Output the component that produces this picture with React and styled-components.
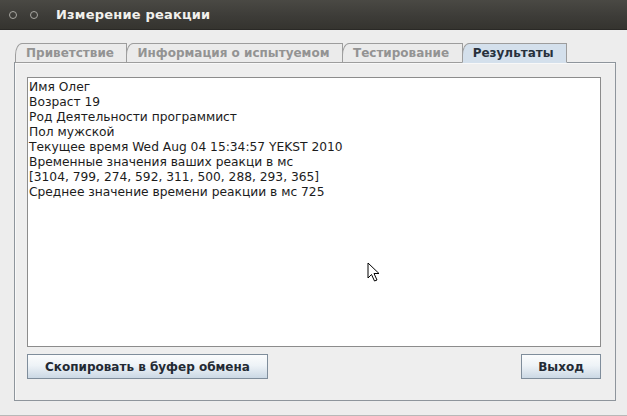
import React from 'react';
import styled, { createGlobalStyle } from 'styled-components';

const GlobalStyle = createGlobalStyle`
  html, body {
    margin: 0;
    padding: 0;
    background: #ededed;
  }
  body {
    font-family: 'DejaVu Sans', 'Liberation Sans', sans-serif;
  }
`;

const Window = styled.div`
  position: relative;
  width: 627px;
  height: 416px;
  display: flex;
  flex-direction: column;
  background: #ededed;
  overflow: hidden;
`;

const TitleBar = styled.div`
  height: 30px;
  flex: none;
  display: flex;
  align-items: center;
  padding-left: 9px;
  background: linear-gradient(#4a4944, #3c3b37 60%, #35342f);
  border-bottom: 1px solid #2a2926;
  box-sizing: border-box;
`;

const Dot = styled.span`
  width: 6px;
  height: 6px;
  border-radius: 50%;
  border: 1px solid #a8a7a2;
  margin-right: 13px;
`;

const Title = styled.span`
  margin-left: 5px;
  color: #f2f1ed;
  font-weight: bold;
  font-size: 13px;
  letter-spacing: 0.2px;
`;

const Content = styled.div`
  flex: 1;
  display: flex;
  flex-direction: column;
  padding: 13px 11px 0 14px;
`;

const TabRow = styled.div`
  display: flex;
  align-items: flex-end;
  height: 20px;
  padding-left: 1px;
  position: relative;
  z-index: 1;
  margin-bottom: -1px;
`;

const Tab = styled.div`
  height: 20px;
  box-sizing: border-box;
  display: flex;
  align-items: center;
  padding: 0 12.5px 0 10px;
  margin-right: -1px;
  font-size: 12px;
  font-weight: bold;
  color: ${(p) => (p.$active ? '#27313d' : '#939393')};
  background: ${(p) => (p.$active ? '#d4e0ec' : '#ebebeb')};
  border: 1px solid #9d9d9d;
  border-bottom: ${(p) => (p.$active ? '1px solid #d4e0ec' : '1px solid #9d9d9d')};
  border-top-left-radius: 7px 12px;
  white-space: nowrap;
`;

const Panel = styled.div`
  height: 339px;
  box-sizing: border-box;
  display: flex;
  flex-direction: column;
  border: 1px solid #8e959c;
  box-shadow: inset 1px 1px 0 #f8f8f8;
  background: #eeeeee;
  padding: 14px 14px 21px 12px;
`;

const Output = styled.div`
  flex: 1;
  background: #ffffff;
  border: 1px solid #8c8c8c;
  padding: 2px 1px;
  font-size: 12.25px;
  line-height: 15px;
  color: #1c1c1c;
`;

const ButtonRow = styled.div`
  display: flex;
  justify-content: space-between;
  margin-top: 7px;
`;

const Button = styled.button`
  height: 25px;
  box-sizing: border-box;
  padding: 0 ${(p) => (p.$wide ? '17px' : '16px')};
  border: 1px solid #7f8d9b;
  border-radius: 0;
  background: linear-gradient(#fbfcfd, #eef3f7 45%, #cbd8e4);
  font-family: 'DejaVu Sans', 'Liberation Sans', sans-serif;
  font-size: 12px;
  font-weight: bold;
  color: #232a33;
  min-width: 80px;
`;

const Footer = styled.div`
  height: 14px;
  flex: none;
  border-bottom: 1px solid #b8b8b8;
  box-sizing: border-box;
  margin-top: auto;
`;

const Cursor = styled.svg`
  position: absolute;
  left: 367px;
  top: 262px;
`;

const lines = [
  'Имя Олег',
  'Возраст 19',
  'Род Деятельности программист',
  'Пол мужской',
  'Текущее время Wed Aug 04 15:34:57 YEKST 2010',
  'Временные значения ваших реакци в мс',
  '[3104, 799, 274, 592, 311, 500, 288, 293, 365]',
  'Среднее значение времени реакции в мс 725',
];

const tabs = ['Приветствие', 'Информация о испытуемом', 'Тестирование', 'Результаты'];

export default function App() {
  return (
    <>
      <GlobalStyle />
      <Window>
        <TitleBar>
          <Dot />
          <Dot />
          <Title>Измерение реакции</Title>
        </TitleBar>
        <Content>
          <TabRow>
            {tabs.map((t, i) => (
              <Tab key={t} $active={i === 3}>
                {t}
              </Tab>
            ))}
          </TabRow>
          <Panel>
            <Output>
              {lines.map((l) => (
                <div key={l}>{l}</div>
              ))}
            </Output>
            <ButtonRow>
              <Button $wide>Скопировать в буфер обмена</Button>
              <Button>Выход</Button>
            </ButtonRow>
          </Panel>
        </Content>
        <Footer />
        <Cursor width="14" height="22" viewBox="0 0 14 22">
          <path
            d="M1 1 L1 16 L4.5 12.5 L7.5 19 L10 18 L7 11.5 L12 11.5 Z"
            fill="#ffffff"
            stroke="#000000"
            strokeWidth="1"
            strokeLinejoin="round"
          />
        </Cursor>
      </Window>
    </>
  );
}
